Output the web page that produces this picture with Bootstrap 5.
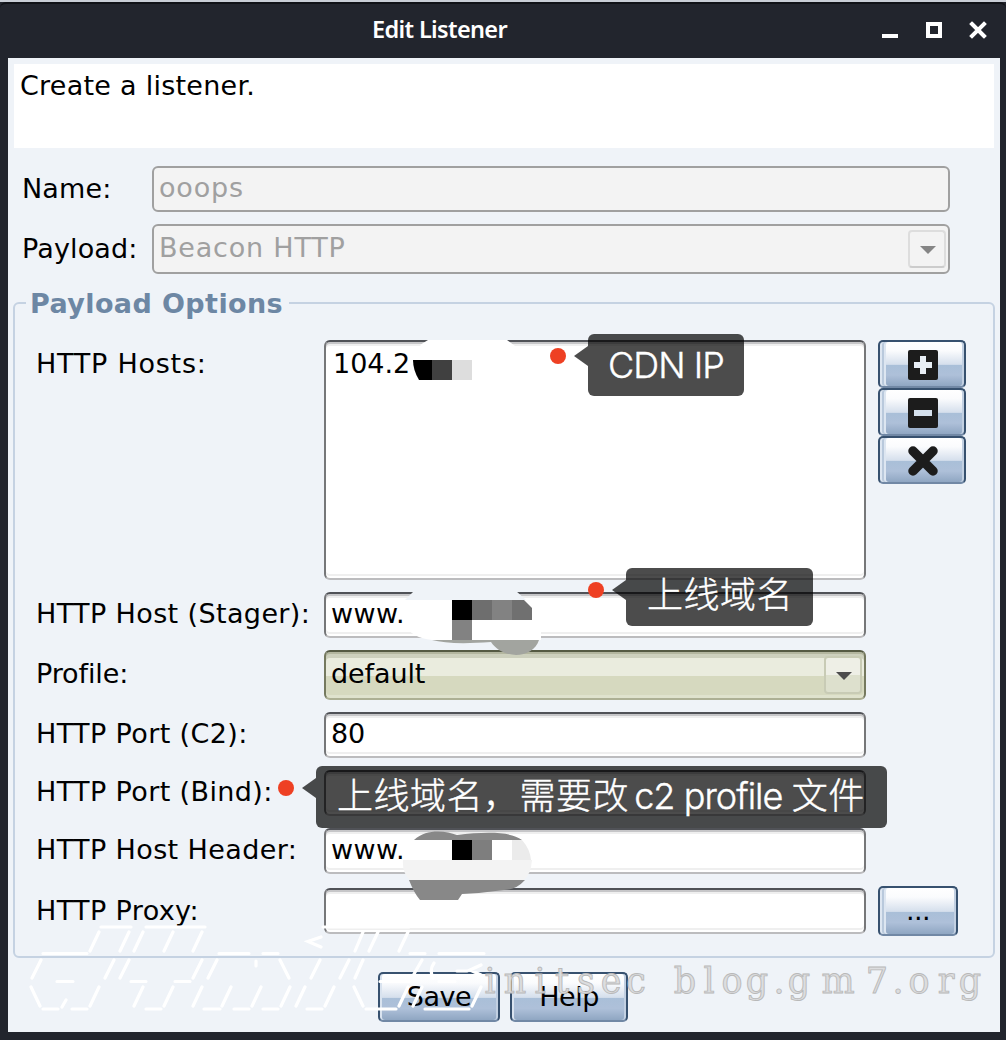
<!DOCTYPE html>
<html lang="en">
<head>
<meta charset="utf-8">
<title>Edit Listener</title>
<link href="https://cdn.jsdelivr.net/npm/bootstrap@5.3.0/dist/css/bootstrap.min.css" rel="stylesheet">
<style>
body{background:#22252d;font-family:"DejaVu Sans",sans-serif;font-size:27px;line-height:30px;color:#000;width:1006px;height:1040px;overflow:hidden}
.win{width:1006px;height:1040px;border-top:2px solid #c9ced6;padding:0 6px 8px 8px}
.tbar{height:56px;margin:0 -6px 0 -8px;border-top:2px solid #101217;padding:0 18px 0 8px;color:#fff;border-radius:6px 6px 0 0}
.ttl{font:600 23.5px/50px "Noto Sans",sans-serif;letter-spacing:-.65px;padding-left:364px}
.panel{height:974px;background:#eff3f8;padding:6px 6px 0}
.intro{height:84px;background:#fff;padding:7px 6px;letter-spacing:.25px}
.fld{height:46px;border:2px solid;border-color:#505257 #767779 #bcbcbe #767779;border-radius:6px;background:#fff;box-shadow:inset 0 2px #c6c6c8,inset 0 4px #efefef,inset 0 -2px #fff,inset 0 -4px #efefef;padding:5px 5px 0;white-space:nowrap;width:542px;letter-spacing:-.1px}
.off{background:#f3f3f3;border-color:#a0a0a0;box-shadow:none;color:#a0a0a0;width:798px;letter-spacing:.8px}
.www{letter-spacing:.4px}
.cmb{height:50px;position:relative;padding-top:7px}
.green{border-color:#555a43 #75795f #adb094 #75795f;background:linear-gradient(#eaecde 0 24px,#d6d9bf 24px);box-shadow:inset 0 2px #b3b69f,inset 0 6px #cdd0bd,inset 0 -3px #dfe2cd}
.arr{width:38px;height:38px;border:2px solid #ddd;border-bottom-color:#ccc;border-radius:4px;margin:-3px -3px 0 0}
.green .arr{border-color:#c8cbb5;background:linear-gradient(#eeefe6 50%,#dde0cd 50%)}
.frm{padding:18px 0 0 8px}
.lab0{width:130px;flex:none;letter-spacing:.15px}
.group{margin:28px -1px 0;border:2px solid #c5d2e2;border-radius:6px;height:656px;padding:36px 0 0 21px;position:relative}
.group>.cap{position:absolute;left:11px;top:-15px;background:#eff3f8;color:#6d87a4;font-weight:700;padding:0 6px 0 4px;font-size:27px;letter-spacing:.4px}
.lab{width:288px;flex:none;padding-top:7px;white-space:nowrap;letter-spacing:.38px}
.lab.dn{padding-top:9px}
.jb{border:2px solid #37516f;border-bottom-color:#7188a5;border-radius:5px;background:linear-gradient(#fff 0,#fafbfd 20%,#d5dfec 51%,#a9bfd8 52%,#aec0d9 75%,#8fa6c2);box-shadow:inset 2px 0 #d9e3ef,inset -2px 0 #c2d0e2;padding:0;height:50px;font-size:27px;letter-spacing:-.5px;line-height:44px;color:#000}
.ib,.dots{box-shadow:inset 2px 0 #dde6f1,inset 4px 0 #b9c9dc,inset 6px 0 #dde6f1,inset -2px 0 #c2d0e2}
.ib{width:88px;height:48px;display:block;line-height:0}
.ib svg{position:relative;left:1px;top:1px}
.dots{width:80px;margin-left:12px}
.tip{position:absolute;background:rgba(0,0,0,.7);color:#fff;border-radius:6px;font-family:Inter,"Noto Sans CJK SC",sans-serif;font-weight:300;-webkit-text-stroke:.4px #fff;font-size:36px;white-space:nowrap}
.tip::before{content:"";position:absolute;left:-14px;top:12px;border:solid transparent;border-width:10px 14px 10px 0;border-right-color:rgba(0,0,0,.7)}
.lat{letter-spacing:-.95px;margin:0 0 0 -4px}
.dotr{position:absolute;width:16px;height:16px;border-radius:50%;background:#ee4023}
.over{position:absolute;left:0;top:0;pointer-events:none}
</style>
<script src="https://cdn.jsdelivr.net/npm/bootstrap@5.3.0/dist/js/bootstrap.bundle.min.js"></script>
</head>
<body class="position-relative m-0">
<div class="win">
  <div class="tbar d-flex justify-content-between">
    <div class="ttl">Edit Listener</div>
    <svg width="106" height="50"><path d="M0 32h16" stroke="#fff" stroke-width="4"/><rect x="46" y="20" width="12" height="12" fill="none" stroke="#fff" stroke-width="4"/><path d="M90 20l12 12M102 20l-12 12" stroke="#fff" stroke-width="4" stroke-linecap="square"/></svg>
  </div>
  <div class="panel">
    <div class="intro">Create a listener.</div>
    <div class="frm d-flex flex-column">
      <div class="d-flex align-items-center mb-2 pb-1"><span class="lab0">Name:</span><div class="fld off">ooops</div></div>
      <div class="d-flex align-items-center"><span class="lab0">Payload:</span><div class="fld cmb off d-flex justify-content-between">Beacon HTTP
        <span class="arr"><svg width="34" height="34" class="d-block"><path d="M10 14h16l-8 8z" fill="#858585"/></svg></span></div></div>
    </div>
    <div class="group"><div class="cap">Payload Options</div>
      <div class="d-flex mb-2 pb-1"><span class="lab dn" style="letter-spacing:.75px">HTTP Hosts:</span><div class="fld" style="height:240px;padding:7px 7px 0;letter-spacing:0">104.2</div>
        <div class="d-flex flex-column ms-2 ps-1">
          <button class="jb ib"><svg width="32" height="32"><rect x="1" y="1" width="30" height="30" rx="2" fill="#1c1c1c"/><path d="M16 7v18M7 16h18" stroke="#e8eef5" stroke-width="6"/></svg></button>
          <button class="jb ib"><svg width="32" height="32"><rect x="1" y="1" width="30" height="30" rx="2" fill="#1c1c1c"/><path d="M7 16h18" stroke="#d5e0ec" stroke-width="6"/></svg></button>
          <button class="jb ib"><svg width="32" height="32"><path d="M6 6l20 20M26 6L6 26" stroke="#1c1c1c" stroke-width="9.500" stroke-linecap="round"/></svg></button>
        </div></div>
      <div class="d-flex mb-2 pb-1"><span class="lab">HTTP Host (Stager):</span><div class="fld www">www.</div></div>
      <div class="d-flex mb-2 pb-1"><span class="lab dn" style="letter-spacing:-.1px">Profile:</span><div class="fld cmb green d-flex justify-content-between">default
        <span class="arr"><svg width="34" height="34" class="d-block"><path d="M10 14h16l-8 8z" fill="#4c4c4c"/></svg></span></div></div>
      <div class="d-flex mb-2 pb-1"><span class="lab">HTTP Port (C2):</span><div class="fld">80</div></div>
      <div class="d-flex mb-2 pb-1"><span class="lab">HTTP Port (Bind):</span><div class="fld"></div></div>
      <div class="d-flex mb-2 pb-1"><span class="lab">HTTP Host Header:</span><div class="fld www">www.</div></div>
      <div class="d-flex align-items-center"><span class="lab pt-0">HTTP Proxy:</span><div class="fld">&nbsp;</div><button class="jb dots">...</button></div>
    </div>
    <div class="d-flex justify-content-center" style="gap:10px;padding:14px 2px 0 0"><button class="jb" style="width:122px">Save</button><button class="jb" style="width:118px">Help</button></div>
  </div>
</div>

<svg class="over" width="1006" height="1040">
  <!-- censored host in the list -->
  <path d="M420 345L428 340H507L515 346L505 355H430z" fill="#fff"/>
  <path d="M413 360H432V380H419Q413 370 413 360z"/><path d="M432 360h20v20h-20z" fill="#404040"/><path d="M452 360h20v20h-20z" fill="#ddd"/>
  <!-- censored stager domain -->
  <path d="M405 600L414 591H516L526 600z" fill="#eff3f8"/>
  <path d="M405 600H526L541 620V640H432Q412 638 405 625z" fill="#fff"/>
  <path d="M452 600h20v20h-20z"/><path d="M472 600h20v20h-20z" fill="#6e6e6e"/><path d="M492 600h20v20h-20z" fill="#828282"/><path d="M512 600h12l8 8v12h-20z" fill="#707070"/><path d="M452 620h20v20h-20z" fill="#828282"/>
  <path d="M432 640H539C533 659 503 660 491 642Q450 645 432 640z" fill="#a2a49f"/>
  <!-- censored host header -->
  <path d="M405 855Q407 845 414 840H522Q532 847 532 860V863H403z" fill="#fff"/>
  <path d="M414 840C427 828 446 831 457 835C484 832 510 831 522 840z" fill="#888"/>
  <path d="M452 840h20v20h-20z"/><path d="M472 840h20v20h-20z" fill="#7e7e7e"/><path d="M512 840h10Q530 849 531 860H512z" fill="#ebebeb"/>
  <path d="M403 860H532Q531 874 524 880H410Q402 873 403 860z" fill="#f3f3f3"/>
  <path d="M409 880H525Q516 890 504 890Q483 893 462 894L458 900H420Q414 893 409 880z" fill="#888"/>
</svg>

<div class="dotr" style="left:550px;top:348px"></div>
<div class="tip" style="left:588px;top:334px;width:156px;height:62px;line-height:63px;padding-left:20px;letter-spacing:-.95px">CDN IP</div>
<div class="dotr" style="left:588px;top:582px"></div>
<div class="tip" style="left:626px;top:568px;width:187px;height:58px;line-height:55px;padding-left:21px;letter-spacing:.5px">上线域名</div>
<div class="dotr" style="left:278px;top:780px"></div>
<div class="tip" style="left:316px;top:766px;width:571px;height:62px;line-height:60px;padding-left:21px;letter-spacing:.5px">上线域名，需要改<span class="lat"> c2 profile </span>文件</div>

<svg class="over" width="1006" height="1040">
  <!-- slanted ASCII banner -->
  <g fill="none" stroke="#fff" stroke-width="3.2" stroke-linecap="round">
    <path d="M101 927H131M146 927H205M323 927H409M43 953.500H87M219 953.500H249M263 953.500H278M410 953.500H425M439 953.500H484M57 981.500H73M131 981.500H146M175 981.500H190M380 981.500H409M439 981.500H455M43 1009H58M72 1009H87M146 1009H161M204 1009H220M234 1009H249M263 1009H278M307 1009H322M366 1009H396M425 1009H469"/>
    <path d="M90 951l9-19M120 951l9-19M134 951l9-19M164 951l9-19M193 951l9-19M355 951l8-19M369 951l9-19M399 951l9-19M321 937l-13 4.500 13 5.500"/>
    <path d="M32 978l9-18M105 978l9-18M120 978l9-18M193 978l9-18M208 978l9-18M256 961v5M280 960l9 18M311 978l9-18M340 978l9-18M355 978l8-18M414 974l8-14M434 963q-5 7-1 15M457 971h10M481 965l-11 5 11 5"/>
    <path d="M31 987l9 19M66 1000l-4 7M90 1006l9-19M134 1006l9-19M164 1006l9-19M193 1006l9-19M222 1006l9-19M252 1006l9-19M281 1006l9-19M296 1006l9-19M325 1006l9-19M354 987l9 19M399 1006l9-19M413 1006l9-19M472 1006l9-19"/>
  </g>
  <text y="993" x="490 515 540 562 586 611 636 661 685 709 732 757 779 799 838 877 898 919 946 970" text-anchor="middle" font-family="DejaVu Serif,serif" font-size="35" fill="#dcdddf" stroke="#b9b9b9" stroke-width=".9">initsec blog.gm7.org</text>
</svg>
</body>
</html>
